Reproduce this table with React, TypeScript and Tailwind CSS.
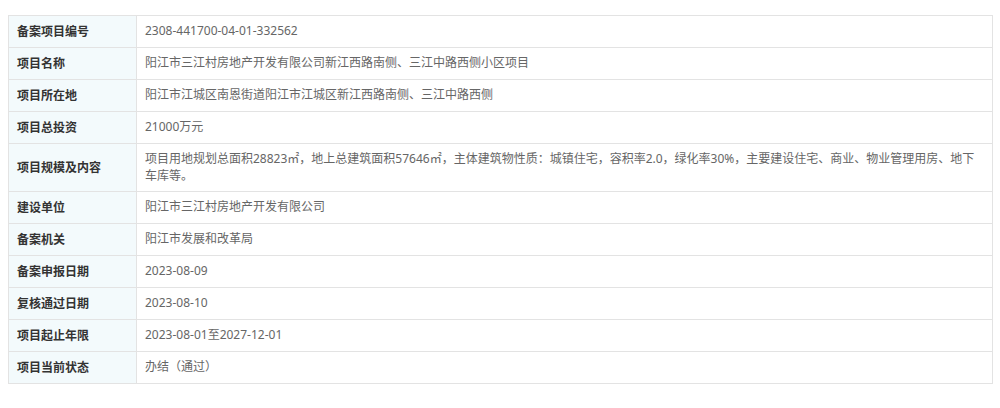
import React from 'react';

interface Row {
  label: string;
  value: string;
}

const rows: Row[] = [
  { label: '备案项目编号', value: '2308-441700-04-01-332562' },
  { label: '项目名称', value: '阳江市三江村房地产开发有限公司新江西路南侧、三江中路西侧小区项目' },
  { label: '项目所在地', value: '阳江市江城区南恩街道阳江市江城区新江西路南侧、三江中路西侧' },
  { label: '项目总投资', value: '21000万元' },
  {
    label: '项目规模及内容',
    value:
      '项目用地规划总面积28823㎡，地上总建筑面积57646㎡，主体建筑物性质：城镇住宅，容积率2.0，绿化率30%，主要建设住宅、商业、物业管理用房、地下车库等。',
  },
  { label: '建设单位', value: '阳江市三江村房地产开发有限公司' },
  { label: '备案机关', value: '阳江市发展和改革局' },
  { label: '备案申报日期', value: '2023-08-09' },
  { label: '复核通过日期', value: '2023-08-10' },
  { label: '项目起止年限', value: '2023-08-01至2027-12-01' },
  { label: '项目当前状态', value: '办结（通过）' },
];

export default function App() {
  return (
    <div
      className="w-[1000px] h-[408px] bg-white pt-[15px] pl-[8px]"
      style={{ fontFamily: '"Noto Sans", "Noto Sans CJK SC", sans-serif' }}
    >
      <table className="w-[985px] border-collapse border border-[#e3e3e3] text-[12px] leading-[17px]">
        <tbody>
          {rows.map((row) => (
            <tr key={row.label}>
              <td className="w-[128px] border border-[#e3e3e3] bg-[#f3fafc] py-[7px] pl-[8px] pr-2 font-bold text-[#333] align-middle">
                {row.label}
              </td>
              <td className="border border-[#e3e3e3] py-[7px] pl-[8px] pr-[14px] leading-[16.5px] text-[#666] align-middle">
                {row.value}
              </td>
            </tr>
          ))}
        </tbody>
      </table>
    </div>
  );
}
